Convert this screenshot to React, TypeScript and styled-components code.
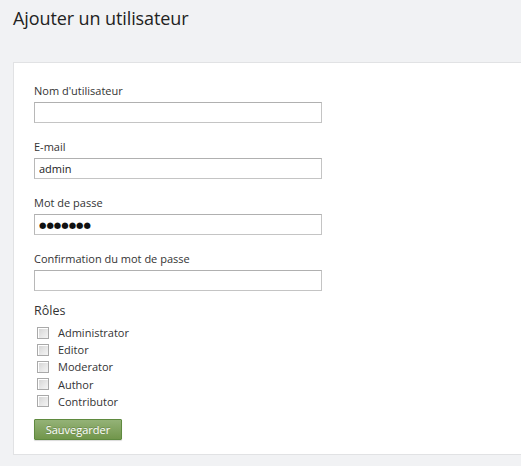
import React from "react";
import styled, { createGlobalStyle } from "styled-components";

const Global = createGlobalStyle`
  html, body { margin: 0; padding: 0; background: #f1f2f4; }
  body { font-family: "Open Sans", "Noto Sans", sans-serif; color: #333; }
`;

const Page = styled.div`
  width: 521px;
  height: 466px;
  overflow: hidden;
  padding-left: 13px;
  box-sizing: border-box;
`;

const Title = styled.h1`
  margin: 0;
  padding-top: 5px;
  height: 62px;
  box-sizing: border-box;
  font-size: 18px;
  font-weight: 400;
  line-height: 26px;
  color: #222;
  letter-spacing: -0.1px;
`;

const Panel = styled.form`
  background: #fff;
  border: 1px solid #e1e2e4;
  border-right: none;
  height: 393px;
  box-sizing: border-box;
  padding: 21px 0 0 20px;
`;

const Field = styled.div`
  display: flex;
  flex-direction: column;
  align-items: flex-start;
  margin-bottom: 17px;
`;

const Label = styled.label`
  font-size: 11px;
  line-height: 14px;
  height: 14px;
  margin-bottom: 4px;
  color: #333;
`;

const Input = styled.input`
  width: 288px;
  height: 21px;
  box-sizing: border-box;
  border: 1px solid #c4c4c4;
  border-top-color: #b0b0b0;
  border-left-color: #b8b8b8;
  padding: 0 4px;
  margin: 0;
  font-family: "Open Sans", "Noto Sans", sans-serif;
  font-size: 11px;
  color: #222;
  background: #fff;
  outline: none;
`;

const PasswordInput = styled(Input)`
  font-family: "DejaVu Sans", sans-serif;
  font-size: 8.5px;
  color: #111;
`;

const RolesTitle = styled.div`
  font-size: 12.5px;
  line-height: 16px;
  margin-top: -5px;
  margin-bottom: 5px;
  color: #333;
`;

const RoleList = styled.div`
  display: flex;
  flex-direction: column;
`;

const RoleRow = styled.label`
  display: flex;
  align-items: center;
  height: 17.2px;
  padding-left: 3px;
  gap: 9px;
  font-size: 11px;
  color: #333;
`;

const Box = styled.input.attrs({ type: "checkbox" })`
  appearance: none;
  width: 12px;
  height: 12px;
  margin: 0;
  border: 1px solid #a9a9a9;
  background: linear-gradient(135deg, #d2d2d2 0%, #e8e8e8 60%, #f4f4f4 100%);
  box-shadow: inset 1px 1px 0 #fff;
  box-sizing: border-box;
`;

const SaveButton = styled.button`
  margin-top: 9px;
  width: 88px;
  height: 21px;
  border: 1px solid #5f8a3f;
  border-radius: 1px;
  background: linear-gradient(#94b277, #71964b);
  color: #fff;
  font-family: "Open Sans", "Noto Sans", sans-serif;
  font-size: 11px;
  text-shadow: 0 -1px 0 rgba(0, 0, 0, 0.2);
  padding: 0;
  box-shadow: 0 1px 1px rgba(0, 0, 0, 0.15);
`;

const roles = ["Administrator", "Editor", "Moderator", "Author", "Contributor"];

export default function App() {
  return (
    <>
      <Global />
      <Page>
        <Title>Ajouter un utilisateur</Title>
        <Panel onSubmit={(e) => e.preventDefault()}>
          <Field>
            <Label>Nom d'utilisateur</Label>
            <Input type="text" defaultValue="" />
          </Field>
          <Field>
            <Label>E-mail</Label>
            <Input type="text" defaultValue="admin" />
          </Field>
          <Field>
            <Label>Mot de passe</Label>
            <PasswordInput type="text" readOnly value="●●●●●●●" />
          </Field>
          <Field>
            <Label>Confirmation du mot de passe</Label>
            <Input type="text" defaultValue="" />
          </Field>
          <RolesTitle>Rôles</RolesTitle>
          <RoleList>
            {roles.map((r) => (
              <RoleRow key={r}>
                <Box />
                {r}
              </RoleRow>
            ))}
          </RoleList>
          <SaveButton type="submit">Sauvegarder</SaveButton>
        </Panel>
      </Page>
    </>
  );
}
